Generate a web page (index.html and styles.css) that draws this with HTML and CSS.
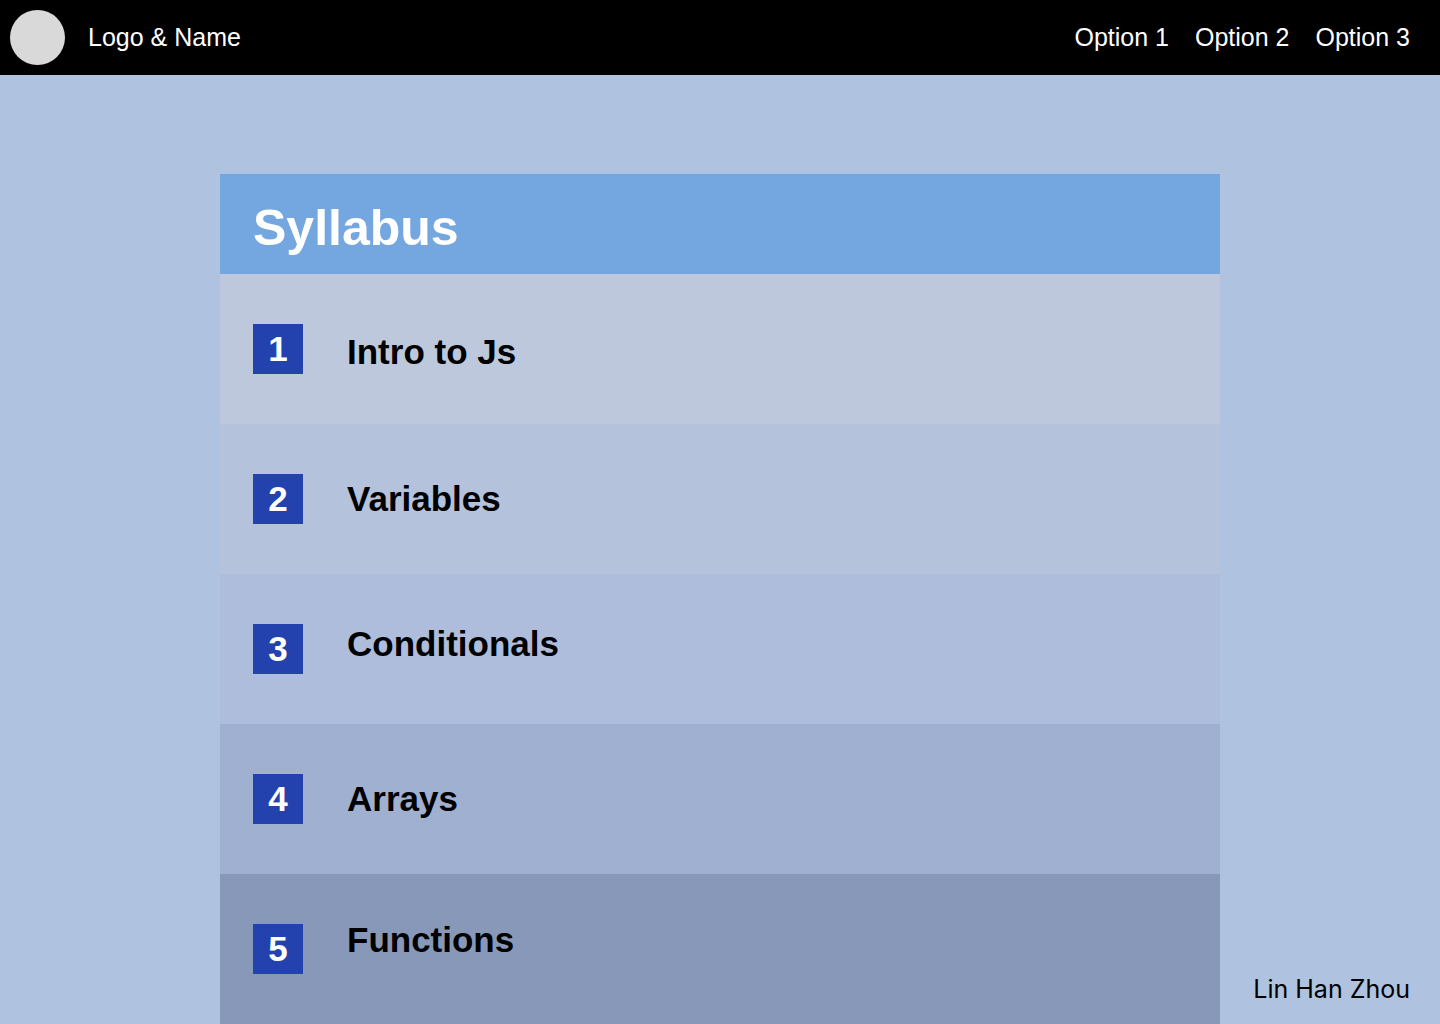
FILE: index.html
```
<!DOCTYPE html>
<html lang="en">
<head>
<meta charset="utf-8">
<meta name="viewport" content="width=device-width, initial-scale=1">
<title>Syllabus</title>
<link rel="stylesheet" href="styles.css">
</head>
<body>
<header class="topbar">
  <a class="brand" href="#"><span class="logo"></span>Logo &amp; Name</a>
  <nav class="menu">
    <a href="#">Option 1</a>
    <a href="#">Option 2</a>
    <a href="#">Option 3</a>
  </nav>
</header>
<main class="content">
  <section class="syllabus">
    <h1 class="title">Syllabus</h1>
    <ol class="units">
      <li class="unit unit-intro"><span class="number">1</span><h2 class="name">Intro to Js</h2></li>
      <li class="unit unit-variables"><span class="number">2</span><h2 class="name">Variables</h2></li>
      <li class="unit unit-conditionals"><span class="number">3</span><h2 class="name">Conditionals</h2></li>
      <li class="unit unit-arrays"><span class="number">4</span><h2 class="name">Arrays</h2></li>
      <li class="unit unit-functions"><span class="number">5</span><h2 class="name">Functions</h2></li>
    </ol>
  </section>
  <footer class="author">Lin Han Zhou</footer>
</main>
</body>
</html>
```
FILE: styles.css
```
* {
  box-sizing: border-box;
}

body {
  margin: 0;
  min-height: 100vh;
  display: flex;
  flex-direction: column;
  background: #afc2e0;
  font-family: "Liberation Sans", Arial, sans-serif;
  color: #000;
}

a {
  color: inherit;
  text-decoration: none;
}

.topbar {
  display: flex;
  align-items: center;
  justify-content: space-between;
  padding: 10px 30px 10px 10px;
  background: #000;
  color: #fff;
  font-size: 25px;
  line-height: 29px;
}

.brand {
  display: flex;
  align-items: center;
  gap: 23px;
}

.logo {
  width: 55px;
  height: 55px;
  border-radius: 50%;
  background: #d9d9d9;
}

.menu {
  display: flex;
  gap: 26px;
}

.content {
  flex: 1;
  display: grid;
  grid-template-columns: 1fr minmax(0, 1000px) 1fr;
  padding-top: 99px;
}

.syllabus {
  grid-column: 2;
}

.title {
  margin: 0;
  padding: 24px 33px 16px;
  background: #74a6e0;
  color: #fff;
  font-size: 50px;
  line-height: 60px;
}

.units {
  margin: 0;
  padding: 0;
  list-style: none;
}

.unit {
  display: flex;
  align-items: center;
  gap: 44px;
  padding: 50px 33px;
}

.number {
  width: 50px;
  background: #2342ad;
  color: #fff;
  font-size: 35px;
  font-weight: bold;
  line-height: 50px;
  text-align: center;
}

.name {
  margin: 0;
  font-size: 35px;
  line-height: 32px;
}

.unit-intro {
  background: #bdc8dc;
}

.unit-intro .name {
  padding-top: 6px;
}

.unit-variables {
  background: #b4c2dc;
}

.unit-conditionals {
  background: #aebddb;
}

.unit-conditionals .name {
  padding-bottom: 10px;
}

.unit-arrays {
  background: #a0b0d1;
}

.unit-functions {
  background: #8898b8;
}

.unit-functions .name {
  align-self: flex-start;
}

.author {
  grid-column: 3;
  align-self: end;
  justify-self: end;
  padding: 0 30px 20px 0;
  font-family: Inter, sans-serif;
  font-size: 25px;
  line-height: 30px;
}
```
